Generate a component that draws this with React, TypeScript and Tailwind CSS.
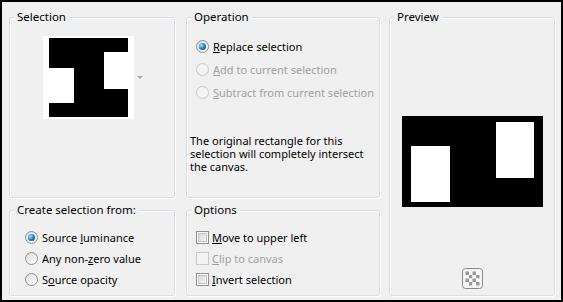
import type { ReactNode } from "react";

const font = { fontFamily: '"Segoe UI", "Noto Sans", "DejaVu Sans", sans-serif' };

function Group({ title, className, children }: { title: string; className?: string; children?: ReactNode }) {
  return (
    <fieldset className={`min-w-0 rounded-[3px] border border-[#d5dfe5] shadow-[inset_1px_1px_0_#fff,1px_1px_0_#fff] ${className ?? ""}`}>
      <legend className="ml-[4px] bg-[#f0f0f0] px-[3px] text-[11.5px] leading-[16px] text-black">{title}</legend>
      {children}
    </fieldset>
  );
}

function Radio({ checked, disabled, children }: { checked?: boolean; disabled?: boolean; children: ReactNode }) {
  return (
    <div className="flex items-center gap-[4px] whitespace-nowrap">
      <span
        className={`flex h-[13px] w-[13px] shrink-0 items-center justify-center rounded-full border ${
          disabled
            ? "border-[#c8c8c8] bg-[#f4f4f4]"
            : "border-[#8e8f8f] bg-[linear-gradient(135deg,#dcdcdc,#ffffff)]"
        }`}
      >
        {checked && (
          <span className="h-[7px] w-[7px] rounded-full bg-[radial-gradient(circle_at_35%_35%,#a6e2ff,#1a76b8_55%,#0b3f6e)]" />
        )}
      </span>
      <span className={`text-[11px] leading-[16px] ${disabled ? "text-[#a0a0a0]" : "text-black"}`}>{children}</span>
    </div>
  );
}

function Check({ disabled, children }: { disabled?: boolean; children: ReactNode }) {
  return (
    <div className="flex items-center gap-[3px] whitespace-nowrap">
      <span
        className={`flex h-[13px] w-[13px] shrink-0 items-center justify-center border ${
          disabled ? "border-[#c8c8c8] bg-[#f4f4f4]" : "border-[#8e8f8f] bg-white"
        }`}
      >
        {!disabled && <span className="h-[9px] w-[9px] border border-[#c6c6c6] bg-[linear-gradient(135deg,#d9d9d9,#f4f4f4)]" />}
      </span>
      <span className={`text-[11px] leading-[16px] ${disabled ? "text-[#a0a0a0]" : "text-black"}`}>{children}</span>
    </div>
  );
}

function Thumb() {
  return (
    <svg width="91" height="83" viewBox="0 0 91 83">
      <rect width="91" height="83" fill="#fff" />
      <rect x="6" y="2" width="79" height="79" fill="#000" />
      <rect x="4" y="32" width="27" height="35" fill="#fff" />
      <rect x="61" y="16" width="24" height="37" fill="#fff" />
    </svg>
  );
}

function PreviewPic() {
  return (
    <svg width="141" height="91" viewBox="0 0 141 91">
      <rect width="141" height="91" fill="#000" />
      <rect x="9" y="30" width="39" height="56" fill="#fff" />
      <rect x="94" y="6" width="38" height="56" fill="#fff" />
    </svg>
  );
}

function CheckerButton() {
  const cells = [];
  for (let r = 0; r < 4; r++) {
    for (let c = 0; c < 4; c++) {
      cells.push(
        <rect key={`${r}-${c}`} x={3.5 + c * 3.5} y={3.5 + r * 3.5} width="3.5" height="3.5" fill={(r + c) % 2 ? "#fff" : "#9a9a9a"} />
      );
    }
  }
  return (
    <svg width="21" height="21" viewBox="0 0 21 21">
      <rect x="0.5" y="0.5" width="20" height="20" rx="3" fill="#f4f4f4" stroke="#8a8a8a" />
      {cells}
    </svg>
  );
}

export default function App() {
  return (
    <div className="flex h-[302px] w-[563px] border-2 border-black bg-[#f0f0f0] pl-[7px] pt-[7px]" style={font}>
      <div className="flex w-[166px] shrink-0 flex-col gap-[4px]">
        <Group title="Selection" className="h-[189px]">
          <div className="ml-[33px] mt-[11px] flex items-center gap-[3px]">
            <Thumb />
            <svg width="6" height="4" viewBox="0 0 6 4">
              <path d="M0 0 L6 0 L3 3 Z" fill="#a8a8a8" />
            </svg>
          </div>
        </Group>
        <Group title="Create selection from:" className="h-[94px]">
          <div className="flex flex-col pl-[15px] pt-[9px]">
            <div className="flex h-[21px] items-center">
              <Radio checked>
                Source <span className="underline">l</span>uminance
              </Radio>
            </div>
            <div className="flex h-[21px] items-center">
              <Radio>
                Any non-<span className="underline">z</span>ero value
              </Radio>
            </div>
            <div className="flex h-[21px] items-center">
              <Radio>
                S<span className="underline">o</span>urce opacity
              </Radio>
            </div>
          </div>
        </Group>
      </div>

      <div className="ml-[11px] flex w-[194px] shrink-0 flex-col gap-[4px]">
        <Group title="Operation" className="h-[189px]">
          <div className="flex flex-col pl-[9px] pt-[10px]">
            <div className="flex h-[23px] items-center">
              <Radio checked>
                <span className="underline">R</span>eplace selection
              </Radio>
            </div>
            <div className="flex h-[23px] items-center">
              <Radio disabled>
                <span className="underline">A</span>dd to current selection
              </Radio>
            </div>
            <div className="flex h-[23px] items-center">
              <Radio disabled>
                <span className="underline">S</span>ubtract from current selection
              </Radio>
            </div>
          </div>
          <p className="mt-[30px] whitespace-nowrap pl-[3px] text-[11px] leading-[13px] text-black">
            The original rectangle for this
            <br />
            selection will completely intersect
            <br />
            the canvas.
          </p>
        </Group>
        <Group title="Options" className="h-[94px]">
          <div className="flex flex-col pl-[9px] pt-[9px]">
            <div className="flex h-[21px] items-center">
              <Check>
                <span className="underline">M</span>ove to upper left
              </Check>
            </div>
            <div className="flex h-[21px] items-center">
              <Check disabled>
                <span className="underline">C</span>lip to canvas
              </Check>
            </div>
            <div className="flex h-[21px] items-center">
              <Check>
                <span className="underline">I</span>nvert selection
              </Check>
            </div>
          </div>
        </Group>
      </div>

      <div className="ml-[9px] w-[166px] shrink-0">
        <Group title="Preview" className="flex h-[287px] flex-col items-center">
          <div className="mt-[91px] flex justify-center">
            <PreviewPic />
          </div>
          <div className="mt-auto mb-[6px] flex justify-center">
            <CheckerButton />
          </div>
        </Group>
      </div>
    </div>
  );
}
